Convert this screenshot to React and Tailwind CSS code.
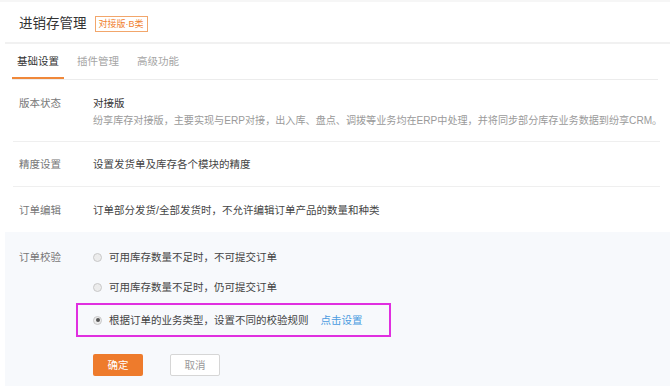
import React, { useState } from 'react';

const FONT = '"Liberation Sans", "Noto Sans CJK SC", sans-serif';

const Radio = ({ checked }) => (
  <span className="relative flex h-[9px] w-[9px] shrink-0 items-center justify-center rounded-full border border-[#c8c8c8] bg-[#ececec]">
    {checked && <span className="h-[4px] w-[4px] rounded-full bg-[#555]" />}
  </span>
);

const Row = ({ label, children, className = '' }) => (
  <div className={`flex border-b border-[#efefef] pl-[6px] ${className}`}>
    <div className="w-[74px] shrink-0 text-[#777]">{label}</div>
    <div className="flex-1">{children}</div>
  </div>
);

export default function App() {
  const [mode, setMode] = useState(2);
  const [tab] = useState(0);
  const tabs = ['基础设置', '插件管理', '高级功能'];
  const options = [
    '可用库存数量不足时，不可提交订单',
    '可用库存数量不足时，仍可提交订单',
    '根据订单的业务类型，设置不同的校验规则',
  ];

  return (
    <div
      className="h-[386px] w-[670px] overflow-hidden bg-white text-[10.5px] leading-[16px] text-[#444]"
      style={{ fontFamily: FONT }}
    >
      {/* Header */}
      <div className="border-t-2 border-[#f6f6f6]">
        <div className="ml-[5px] flex h-[42px] items-center border-b-2 border-[#f1f1f1] pl-[14px] pt-[4px]">
          <span className="text-[13.5px] text-[#333]">进销存管理</span>
          <span className="ml-[8px] flex h-[16px] items-center border border-[#f2a66b] px-[3px] text-[9px] leading-none text-[#f07f2f]">
            对接版·B类
          </span>
        </div>
      </div>

      {/* Tabs */}
      <div className="mx-[12px] flex h-[36px] gap-[8px] border-b border-[#ececec]">
        {tabs.map((t, i) => (
          <div
            key={t}
            className={`flex items-center px-[5px] ${
              i === tab
                ? 'border-b-2 border-[#f0883a] text-[#333]'
                : 'border-b-2 border-transparent text-[#a5a5a5]'
            }`}
          >
            {t}
          </div>
        ))}
      </div>

      {/* Rows */}
      <div className="ml-[13px] mr-[10px]">
        <Row label="版本状态" className="h-[62px] pt-[15px]">
          <div className="text-[#333]">对接版</div>
          <div className="mt-[2px] whitespace-nowrap text-[10.1px] text-[#9a9a9a]">
            纷享库存对接版，主要实现与ERP对接，出入库、盘点、调拨等业务均在ERP中处理，并将同步部分库存业务数据到纷享CRM。
          </div>
        </Row>
        <Row label="精度设置" className="h-[45px] items-center">
          设置发货单及库存各个模块的精度
        </Row>
        <Row label="订单编辑" className="h-[45px] items-center border-b-0">
          订单部分发货/全部发货时，不允许编辑订单产品的数量和种类
        </Row>
      </div>

      {/* Order check */}
      <div className="ml-[5px] flex h-[160px] bg-[#f7f9fc] pl-[14px] pt-[17px]">
        <div className="w-[74px] shrink-0 text-[#777]">订单校验</div>
        <div className="flex flex-col">
          {options.map((o, i) =>
            i === 2 ? (
              <div
                key={o}
                onClick={() => setMode(i)}
                className="-ml-[17px] mt-[8px] flex h-[34px] w-[315px] items-center border-2 border-[#e02fe0] pl-[15px]"
              >
                <Radio checked={mode === i} />
                <span className="ml-[7px]">{o}</span>
                <span className="ml-[12px] text-[#4a9be0]">点击设置</span>
              </div>
            ) : (
              <div
                key={o}
                onClick={() => setMode(i)}
                className={`flex h-[16px] items-center ${i === 1 ? 'mt-[14px]' : ''}`}
              >
                <Radio checked={mode === i} />
                <span className="ml-[7px]">{o}</span>
              </div>
            )
          )}
          <div className="mt-[17px] flex gap-[27px]">
            <button className="h-[22px] w-[50px] rounded-[2px] bg-[#ee7b2c] text-[10.5px] text-white">
              确定
            </button>
            <button className="h-[22px] w-[50px] rounded-[2px] border border-[#d6d6d6] bg-white text-[10.5px] text-[#9a9a9a]">
              取消
            </button>
          </div>
        </div>
      </div>
    </div>
  );
}
